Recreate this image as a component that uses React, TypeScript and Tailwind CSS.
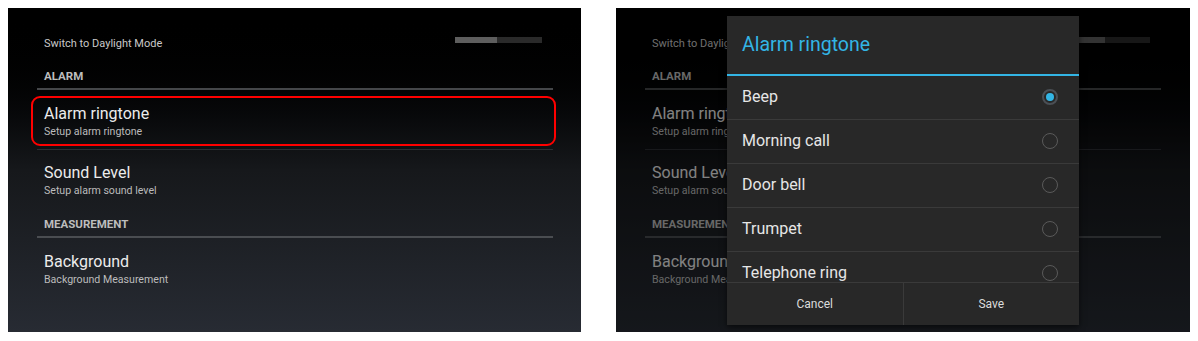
import React from 'react'

const ringtones = ['Beep', 'Morning call', 'Door bell', 'Trumpet', 'Telephone ring']

function SettingsList({ showMark }: { showMark: boolean }) {
  return (
    <div className="ml-[29px] w-[516px] pt-[24px]">
      {/* Daylight row + slider */}
      <div className="flex h-[22px] items-center justify-between pl-[7px] pr-[11px]">
        <span className="pt-[2px] text-[11px] text-[#c9c9c9]">Switch to Daylight Mode</span>
        <div className="mb-[6px] h-[6px] w-[87px] bg-[#2a2a2a]">
          <div className="h-full w-[42px] bg-[#5e5e5e]" />
        </div>
      </div>

      {/* ALARM */}
      <div className="flex h-[34px] items-end pb-[5px] pl-[7px]">
        <span className="text-[11.5px] font-bold leading-[13px] text-[#bdbdbd]">ALARM</span>
      </div>
      <div className="h-[2px] bg-[#45474a]" />

      <div className="relative mt-[6px] h-[50px] pl-[7px] pt-[8px]">
        {showMark && (
          <div className="absolute -left-[6px] -right-[3px] inset-y-0 rounded-[9px] border-2 border-[#ff0000]" />
        )}
        <div className="text-[16px] leading-[20px] text-[#ececec]">Alarm ringtone</div>
        <div className="mt-[1px] text-[10.6px] leading-[14px] text-[#bcbcbc]">Setup alarm ringtone</div>
      </div>
      <div className="mt-[3px] h-px bg-[#2c2f33]" />

      <div className="mt-[4px] h-[50px] pl-[7px] pt-[9px]">
        <div className="text-[16px] leading-[20px] text-[#ececec]">Sound Level</div>
        <div className="mt-[1px] text-[10.6px] leading-[14px] text-[#bcbcbc]">Setup alarm sound level</div>
      </div>

      {/* MEASUREMENT */}
      <div className="flex h-[32px] items-end pb-[5px] pl-[7px]">
        <span className="text-[11.5px] font-bold leading-[13px] text-[#bdbdbd]">MEASUREMENT</span>
      </div>
      <div className="h-[2px] bg-[#4a4d51]" />

      <div className="mt-[5px] h-[50px] pl-[7px] pt-[9px]">
        <div className="text-[16px] leading-[20px] text-[#ececec]">Background</div>
        <div className="mt-[1px] text-[10.6px] leading-[14px] text-[#bcbcbc]">Background Measurement</div>
      </div>
    </div>
  )
}

function Radio({ checked }: { checked: boolean }) {
  return (
    <div
      className={
        checked
          ? 'flex h-[16px] w-[16px] items-center justify-center rounded-full border-2 border-[#4a4f55]'
          : 'h-[16px] w-[16px] rounded-full border-[1.5px] border-[#5a5a5a]'
      }
    >
      {checked && <div className="h-[8px] w-[8px] rounded-full bg-[#33b5e5]" />}
    </div>
  )
}

function RingtoneDialog() {
  return (
    <div className="flex h-[309px] w-[352px] flex-col bg-[#282828] shadow-[0_2px_6px_rgba(0,0,0,0.6)]">
      <div className="flex h-[58px] items-center pl-[15px] text-[19.5px] text-[#33b5e5]">Alarm ringtone</div>
      <div className="h-[2px] bg-[#33b5e5]" />
      <div className="h-[206px] overflow-hidden">
        {ringtones.map((name, i) => (
          <div key={name} className="flex h-[44px] items-center justify-between border-b border-[#3a3a3a] pl-[15px] pr-[21px]">
            <span className="text-[16px] text-[#e6e6e6]">{name}</span>
            <Radio checked={i === 0} />
          </div>
        ))}
      </div>
      <div className="h-px bg-[#3a3a3a]" />
      <div className="flex flex-1">
        <div className="flex flex-1 items-center justify-center border-r border-[#3a3a3a] text-[12px] text-[#dcdcdc]">Cancel</div>
        <div className="flex flex-1 items-center justify-center text-[12px] text-[#dcdcdc]">Save</div>
      </div>
    </div>
  )
}

export default function App() {
  return (
    <div className="flex h-[341px] w-[1198px] gap-[35px] bg-white pl-[8px] pt-[8px] font-['Roboto',sans-serif]">
      <div className="h-[324px] w-[573px] overflow-hidden bg-linear-to-b from-black via-[#16181b] to-[#272b33]">
        <SettingsList showMark />
      </div>

      <div className="relative h-[324px] w-[574px] overflow-hidden bg-linear-to-b from-black via-[#16181b] to-[#272b33]">
        <SettingsList showMark={false} />
        <div className="absolute inset-0 flex items-center justify-center bg-black/45">
          <RingtoneDialog />
        </div>
      </div>
    </div>
  )
}
